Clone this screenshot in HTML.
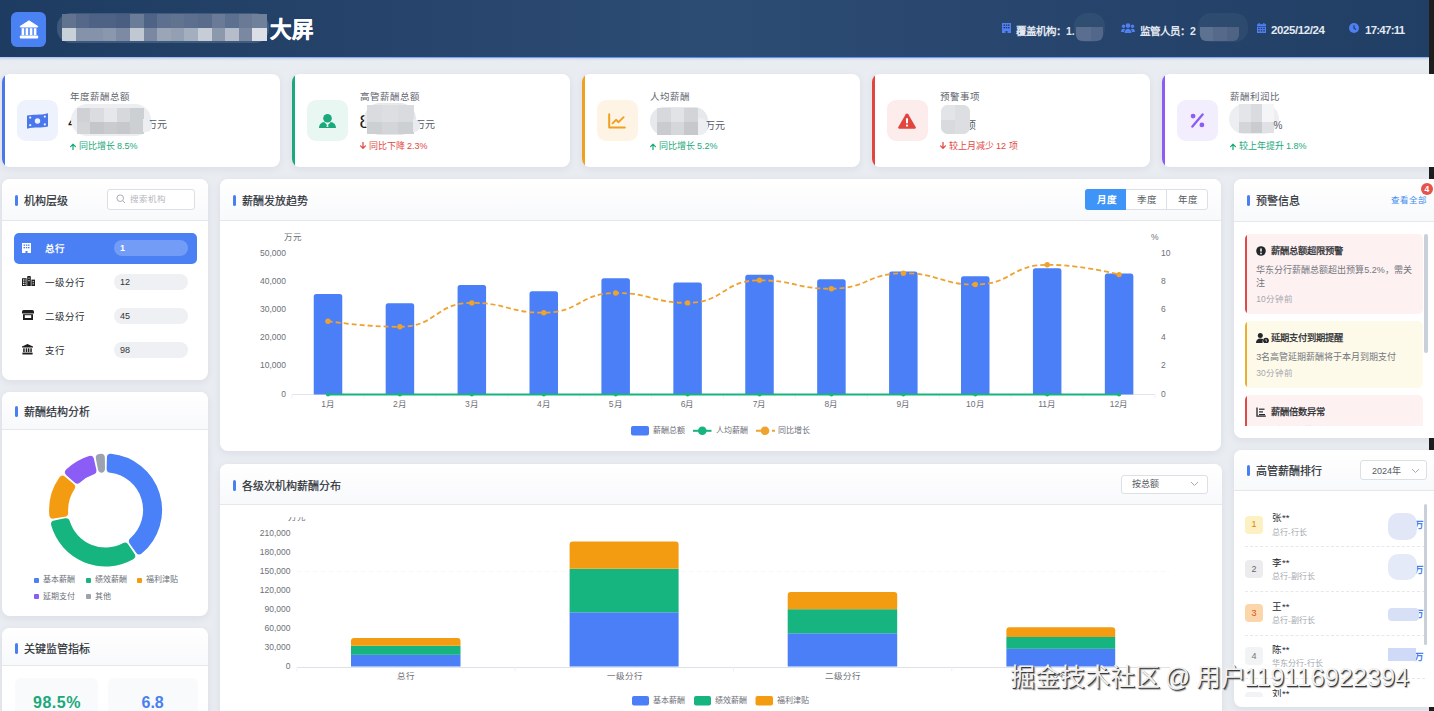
<!DOCTYPE html><html lang="zh-CN"><head><meta charset="utf-8"><title>dashboard</title><style>
*{box-sizing:border-box;margin:0;padding:0}
html,body{width:1434px;height:711px;overflow:hidden;background:#1e1e1e}
body{position:relative;font-family:"Liberation Sans",sans-serif;color:#222}
.a{position:absolute}
.page{left:0;top:0;width:1429px;height:711px;background:#e9ecf1}
.hdr{left:0;top:0;width:1429px;height:57px;background:linear-gradient(90deg,#1e3b61 0%,#2d4c73 50%,#213e65 100%)}
.hline{left:0;top:56.5px;width:1429px;height:1.5px;background:linear-gradient(90deg,rgba(74,128,240,.3),#5a8cf0 50%,rgba(74,128,240,.5));box-shadow:0 1px 2px rgba(90,140,230,.4)}
.card{background:#fff;border-radius:8px;box-shadow:0 2px 8px rgba(30,50,90,.07)}
.t{white-space:nowrap;line-height:1}
.ph{left:0;top:0;right:0;background:linear-gradient(180deg,#ffffff,#f8f9fb);border-bottom:1px solid #e4e7ec;border-radius:8px 8px 0 0}
.bar{width:3px;border-radius:2px;background:#4a7ff0}
.ptitle{font-size:11px;font-weight:normal;color:#2a2e35;-webkit-text-stroke:0.2px #2a2e35}
</style></head><body>
<div class="a page"></div>
<div class="a hdr"></div><div class="a hline"></div>
<div class="a" style="left:11px;top:12px;width:35px;height:35px;border-radius:6px;background:#4b82f3"></div>
<svg class="a" style="left:19px;top:19.5px" width="20" height="19" viewBox="0 0 20 19"><path fill="#fff" stroke="#fff" stroke-width="1" stroke-linejoin="round" d="M10 0.8 L18.8 6.4 Q19 7 18.4 7 H1.6 Q1 7 1.2 6.4 Z"/><rect x="2.6" y="8.2" width="2.6" height="7" fill="#fff"/><rect x="6.6" y="8.2" width="2.6" height="7" fill="#fff"/><rect x="10.8" y="8.2" width="2.6" height="7" fill="#fff"/><rect x="14.8" y="8.2" width="2.6" height="7" fill="#fff"/><rect x="0.8" y="15.4" width="18.4" height="3" rx="1" fill="#fff"/></svg>
<div class="a" style="left:57px;top:13px;width:212px;height:30px;border-radius:14px;background:rgba(120,140,170,.35)"></div>
<div class="a" style="left:62.0px;top:14px;width:14.2px;height:13.5px;background:#62738f"></div>
<div class="a" style="left:62.0px;top:27.5px;width:14.2px;height:13.5px;background:#c8d0d8"></div>
<div class="a" style="left:75.6px;top:14px;width:14.2px;height:13.5px;background:#56688a"></div>
<div class="a" style="left:75.6px;top:27.5px;width:14.2px;height:13.5px;background:#8593aa"></div>
<div class="a" style="left:89.2px;top:14px;width:14.2px;height:13.5px;background:#4e6285"></div>
<div class="a" style="left:89.2px;top:27.5px;width:14.2px;height:13.5px;background:#8593aa"></div>
<div class="a" style="left:102.8px;top:14px;width:14.2px;height:13.5px;background:#4e6285"></div>
<div class="a" style="left:102.8px;top:27.5px;width:14.2px;height:13.5px;background:#8a98ad"></div>
<div class="a" style="left:116.4px;top:14px;width:14.2px;height:13.5px;background:#4a5e82"></div>
<div class="a" style="left:116.4px;top:27.5px;width:14.2px;height:13.5px;background:#7c8ba3"></div>
<div class="a" style="left:130.0px;top:14px;width:14.2px;height:13.5px;background:#6a7c98"></div>
<div class="a" style="left:130.0px;top:27.5px;width:14.2px;height:13.5px;background:#c0c8d2"></div>
<div class="a" style="left:143.6px;top:14px;width:14.2px;height:13.5px;background:#4f6386"></div>
<div class="a" style="left:143.6px;top:27.5px;width:14.2px;height:13.5px;background:#7a89a1"></div>
<div class="a" style="left:157.2px;top:14px;width:14.2px;height:13.5px;background:#5e7090"></div>
<div class="a" style="left:157.2px;top:27.5px;width:14.2px;height:13.5px;background:#9aa6b8"></div>
<div class="a" style="left:170.8px;top:14px;width:14.2px;height:13.5px;background:#62738f"></div>
<div class="a" style="left:170.8px;top:27.5px;width:14.2px;height:13.5px;background:#939fb3"></div>
<div class="a" style="left:184.4px;top:14px;width:14.2px;height:13.5px;background:#5d6f8f"></div>
<div class="a" style="left:184.4px;top:27.5px;width:14.2px;height:13.5px;background:#a3aebe"></div>
<div class="a" style="left:198.0px;top:14px;width:14.2px;height:13.5px;background:#5a6c8c"></div>
<div class="a" style="left:198.0px;top:27.5px;width:14.2px;height:13.5px;background:#c6cdd6"></div>
<div class="a" style="left:211.6px;top:14px;width:14.2px;height:13.5px;background:#697b97"></div>
<div class="a" style="left:211.6px;top:27.5px;width:14.2px;height:13.5px;background:#8c99ad"></div>
<div class="a" style="left:225.2px;top:14px;width:14.2px;height:13.5px;background:#5e708f"></div>
<div class="a" style="left:225.2px;top:27.5px;width:14.2px;height:13.5px;background:#b4bdc9"></div>
<div class="a" style="left:238.8px;top:14px;width:14.2px;height:13.5px;background:#6a7a96"></div>
<div class="a" style="left:238.8px;top:27.5px;width:14.2px;height:13.5px;background:#7a89a1"></div>
<div class="a" style="left:252.4px;top:14px;width:14.2px;height:13.5px;background:#6f809a"></div>
<div class="a" style="left:252.4px;top:27.5px;width:14.2px;height:13.5px;background:#dcdfe5"></div>
<div class="a t" style="left:270px;top:19.5px;font-size:21.5px;font-weight:bold;color:#fff;-webkit-text-stroke:0.4px #fff">大屏</div>
<svg class="a" style="left:1002px;top:23px" width="9" height="10" viewBox="0 0 9 10"><path fill="#4f7ff2" d="M0 0h9v10H5.5V8h-2v2H0z"/><g fill="#203c62"><rect x="1.5" y="1.5" width="1.5" height="1.3"/><rect x="3.8" y="1.5" width="1.5" height="1.3"/><rect x="6" y="1.5" width="1.5" height="1.3"/><rect x="1.5" y="4" width="1.5" height="1.3"/><rect x="3.8" y="4" width="1.5" height="1.3"/><rect x="6" y="4" width="1.5" height="1.3"/></g></svg>
<div class="a t" style="left:1016px;top:25.5px;font-size:10.5px;font-weight:bold;color:#e3e9f2">覆盖机构：1.</div>
<div class="a" style="left:1074px;top:13px;width:31px;height:29px;border-radius:13px;background:rgba(255,255,255,.045)"></div>
<div class="a" style="left:1076px;top:27px;width:15px;height:14px;border-radius:0 0 0 6px;background:#5a6f8f"></div>
<div class="a" style="left:1091px;top:27px;width:12px;height:14px;border-radius:0 0 6px 0;background:#52678a"></div>
<svg class="a" style="left:1121px;top:23px" width="14" height="10" viewBox="0 0 14 10"><g fill="#4f7ff2"><circle cx="7" cy="2.6" r="2.3"/><circle cx="2.5" cy="3.2" r="1.7"/><circle cx="11.5" cy="3.2" r="1.7"/><path d="M3.5 10c0-2.6 1.5-4.2 3.5-4.2s3.5 1.6 3.5 4.2z"/><path d="M0 9c0-2 1-3.2 2.5-3.2 .8 0 1.3.3 1.6.6C3.4 7.2 3 8 3 9z"/><path d="M14 9c0-2-1-3.2-2.5-3.2-.8 0-1.3.3-1.6.6.7.8 1.1 1.6 1.1 2.6z"/></g></svg>
<div class="a t" style="left:1140px;top:25.5px;font-size:10.5px;font-weight:bold;color:#e3e9f2">监管人员：2</div>
<div class="a" style="left:1198px;top:13px;width:50px;height:29px;border-radius:13px;background:rgba(255,255,255,.045)"></div>
<div class="a" style="left:1200px;top:27px;width:13px;height:14px;border-radius:0 0 0 6px;background:#5d7190"></div>
<div class="a" style="left:1213px;top:27px;width:14px;height:14px;background:#56698a"></div>
<div class="a" style="left:1227px;top:27px;width:12px;height:14px;border-radius:0 0 6px 0;background:#4f6385"></div>
<svg class="a" style="left:1257px;top:23px" width="9" height="10" viewBox="0 0 9 10"><g fill="#4f7ff2"><rect x="1.5" y="0" width="1.3" height="2"/><rect x="6.2" y="0" width="1.3" height="2"/><path d="M0 1.2h9v2H0z"/><path d="M0 3.8h9V10H0z"/></g><g fill="#203c62"><rect x="1.2" y="4.8" width="1.5" height="1.3"/><rect x="3.75" y="4.8" width="1.5" height="1.3"/><rect x="6.3" y="4.8" width="1.5" height="1.3"/><rect x="1.2" y="7.2" width="1.5" height="1.3"/><rect x="3.75" y="7.2" width="1.5" height="1.3"/><rect x="6.3" y="7.2" width="1.5" height="1.3"/></g></svg>
<div class="a t" style="left:1271px;top:25px;font-size:11.5px;letter-spacing:-0.4px;font-weight:bold;color:#e3e9f2">2025/12/24</div>
<svg class="a" style="left:1349px;top:23px" width="10" height="10" viewBox="0 0 10 10"><circle cx="5" cy="5" r="5" fill="#4f7ff2"/><path d="M5 2.2V5.2L7 6.6" stroke="#203c62" stroke-width="1.2" fill="none"/></svg>
<div class="a t" style="left:1365px;top:25px;font-size:11.5px;letter-spacing:-0.75px;font-weight:bold;color:#e3e9f2">17:47:11</div>
<div class="a card" style="left:2px;top:74px;width:278px;height:93px;overflow:hidden"><div class="a" style="left:0;top:0;width:3px;height:93px;background:#4a78ec"></div></div>
<div class="a" style="left:16.5px;top:100px;width:41px;height:41px;border-radius:9px;background:#eef2fd"></div>
<div class="a" style="left:26.5px;top:112.5px;width:21px;height:16px;line-height:0"><svg width="21" height="16" viewBox="0 0 21 16"><path fill="#4a78ec" d="M0 2.6 C6 1.2 12 2.6 21 0.3 V13.6 C14 15.4 8 13.8 0 15.8 Z"/><circle cx="10.5" cy="8" r="2.7" fill="#eef2fd"/><g fill="#eef2fd"><circle cx="3.2" cy="4.6" r="1.1"/><circle cx="17.8" cy="3.6" r="1.1"/><circle cx="3.2" cy="12.2" r="1.1"/><circle cx="17.8" cy="11.4" r="1.1"/></g></svg></div>
<div class="a t" style="left:70px;top:91.5px;font-size:9.5px;color:#5f6670">年度薪酬总额</div>
<svg class="a" style="left:69.8px;top:142.5px" width="6" height="7.5" viewBox="0 0 6 7.5"><path d="M3 7.2V1.4M0.6 3.6L3 1.1 5.4 3.6" fill="none" stroke="#1aa97a" stroke-width="1.25" stroke-linecap="round" stroke-linejoin="round"/></svg>
<div class="a t" style="left:78.5px;top:141.5px;font-size:9px;color:#1aa97a">同比增长 8.5%</div>
<div class="a card" style="left:292px;top:74px;width:278px;height:93px;overflow:hidden"><div class="a" style="left:0;top:0;width:3px;height:93px;background:#1aa97a"></div></div>
<div class="a" style="left:306.5px;top:100px;width:41px;height:41px;border-radius:9px;background:#e8f7f1"></div>
<div class="a" style="left:318.5px;top:113.5px;width:17px;height:14px;line-height:0"><svg width="17" height="14" viewBox="0 0 17 14"><circle cx="8.5" cy="4.3" r="4.3" fill="#1aa97a"/><path fill="#1aa97a" d="M0 14 C0 10.6 2.2 8.3 5.2 8 L8.5 11.5 L11.8 8 C14.8 8.3 17 10.6 17 14 Z"/><path fill="#e8f7f1" d="M7.8 9.2h1.4l-.2 1.2.5 2.6h-2l.5-2.6z"/></svg></div>
<div class="a t" style="left:360px;top:91.5px;font-size:9.5px;color:#5f6670">高管薪酬总额</div>
<svg class="a" style="left:359.8px;top:142px" width="6" height="7.5" viewBox="0 0 6 7.5"><path d="M3 0.3V6.1M0.6 3.9L3 6.4 5.4 3.9" fill="none" stroke="#e2473f" stroke-width="1.25" stroke-linecap="round" stroke-linejoin="round"/></svg>
<div class="a t" style="left:368.5px;top:141.5px;font-size:9px;color:#e2473f">同比下降 2.3%</div>
<div class="a card" style="left:582px;top:74px;width:278px;height:93px;overflow:hidden"><div class="a" style="left:0;top:0;width:3px;height:93px;background:#f0a020"></div></div>
<div class="a" style="left:596.5px;top:100px;width:41px;height:41px;border-radius:9px;background:#fef4e6"></div>
<div class="a" style="left:608.0px;top:112.5px;width:18px;height:16px;line-height:0"><svg width="18" height="16" viewBox="0 0 18 16"><path fill="none" stroke="#f0a020" stroke-width="2" stroke-linecap="round" stroke-linejoin="round" d="M1.2 1.2 V14.6 H16.8"/><path fill="none" stroke="#f0a020" stroke-width="1.9" stroke-linecap="round" stroke-linejoin="round" d="M4.6 10.4 L8 6.8 L10.6 9.2 L15.6 4.2"/></svg></div>
<div class="a t" style="left:650px;top:91.5px;font-size:9.5px;color:#5f6670">人均薪酬</div>
<svg class="a" style="left:649.8px;top:142.5px" width="6" height="7.5" viewBox="0 0 6 7.5"><path d="M3 7.2V1.4M0.6 3.6L3 1.1 5.4 3.6" fill="none" stroke="#1aa97a" stroke-width="1.25" stroke-linecap="round" stroke-linejoin="round"/></svg>
<div class="a t" style="left:658.5px;top:141.5px;font-size:9px;color:#1aa97a">同比增长 5.2%</div>
<div class="a card" style="left:872px;top:74px;width:278px;height:93px;overflow:hidden"><div class="a" style="left:0;top:0;width:3px;height:93px;background:#e0463e"></div></div>
<div class="a" style="left:886.5px;top:100px;width:41px;height:41px;border-radius:9px;background:#fdecec"></div>
<div class="a" style="left:898.0px;top:112.5px;width:18px;height:16px;line-height:0"><svg width="18" height="16" viewBox="0 0 18 16"><path fill="#e0463e" d="M9 0.4 C9.6 0.4 10 0.7 10.3 1.2 L17.7 13.9 C18.2 14.8 17.6 15.8 16.6 15.8 H1.4 C0.4 15.8 -0.2 14.8 0.3 13.9 L7.7 1.2 C8 0.7 8.4 0.4 9 0.4 Z"/><rect x="8" y="5" width="2" height="5.4" rx="1" fill="#fff"/><circle cx="9" cy="12.6" r="1.15" fill="#fff"/></svg></div>
<div class="a t" style="left:940px;top:91.5px;font-size:9.5px;color:#5f6670">预警事项</div>
<svg class="a" style="left:939.8px;top:142px" width="6" height="7.5" viewBox="0 0 6 7.5"><path d="M3 0.3V6.1M0.6 3.9L3 6.4 5.4 3.9" fill="none" stroke="#e2473f" stroke-width="1.25" stroke-linecap="round" stroke-linejoin="round"/></svg>
<div class="a t" style="left:948.5px;top:141.5px;font-size:9px;color:#e2473f">较上月减少 12 项</div>
<div class="a card" style="left:1162px;top:74px;width:290px;height:93px;overflow:hidden"><div class="a" style="left:0;top:0;width:3px;height:93px;background:#8b5cf6"></div></div>
<div class="a" style="left:1176.5px;top:100px;width:41px;height:41px;border-radius:9px;background:#f2eefd"></div>
<div class="a" style="left:1189.5px;top:113.0px;width:15px;height:15px;line-height:0"><svg width="15" height="15" viewBox="0 0 15 15"><circle cx="3.1" cy="3.1" r="2.4" fill="#8b5cf6"/><circle cx="11.9" cy="11.9" r="2.4" fill="#8b5cf6"/><path d="M12.6 1.4 L2.4 13.6" stroke="#8b5cf6" stroke-width="2.3" stroke-linecap="round"/></svg></div>
<div class="a t" style="left:1230px;top:91.5px;font-size:9.5px;color:#5f6670">薪酬利润比</div>
<svg class="a" style="left:1229.8px;top:142.5px" width="6" height="7.5" viewBox="0 0 6 7.5"><path d="M3 7.2V1.4M0.6 3.6L3 1.1 5.4 3.6" fill="none" stroke="#1aa97a" stroke-width="1.25" stroke-linecap="round" stroke-linejoin="round"/></svg>
<div class="a t" style="left:1238.5px;top:141.5px;font-size:9px;color:#1aa97a">较上年提升 1.8%</div>
<div class="a t" style="left:68px;top:112px;font-size:19px;color:#1d1d1f">4</div>
<div class="a" style="left:71px;top:103.5px;width:80px;height:32.0px;border-radius:16px;background:#eceef1"></div>
<div class="a" style="left:76.7px;top:108px;width:13.9px;height:14.4px;background:#cfd1d5"></div>
<div class="a" style="left:76.7px;top:121.8px;width:13.9px;height:12.5px;background:#d3d5d8"></div>
<div class="a" style="left:90.1px;top:108px;width:13.9px;height:14.4px;background:#dadcdf"></div>
<div class="a" style="left:90.1px;top:121.8px;width:13.9px;height:12.5px;background:#c4c6ca"></div>
<div class="a" style="left:103.5px;top:108px;width:13.9px;height:14.4px;background:#e6e7ea"></div>
<div class="a" style="left:103.5px;top:121.8px;width:13.9px;height:12.5px;background:#c9cbce"></div>
<div class="a" style="left:116.9px;top:108px;width:13.9px;height:14.4px;background:#d6d8db"></div>
<div class="a" style="left:116.9px;top:121.8px;width:13.9px;height:12.5px;background:#c6c8cc"></div>
<div class="a" style="left:130.3px;top:108px;width:13.9px;height:14.4px;background:#cdd0d3"></div>
<div class="a" style="left:130.3px;top:121.8px;width:13.9px;height:12.5px;background:#cdd0d3"></div>
<div class="a t" style="left:147px;top:120px;font-size:10px;color:#555b63">万元</div>
<div class="a" style="left:143px;top:119px;width:9px;height:13px;border-radius:0 6px 6px 0;background:#eceef1"></div>
<div class="a t" style="left:359.5px;top:112px;font-size:19px;color:#1d1d1f">8</div>
<div class="a" style="left:364px;top:103px;width:52px;height:32px;border-radius:16px;background:#e6e8eb"></div>
<div class="a" style="left:366.7px;top:104.7px;width:16.2px;height:17.6px;background:#d9dbde"></div>
<div class="a" style="left:366.7px;top:121.7px;width:16.2px;height:12.2px;background:#cdd0d3"></div>
<div class="a" style="left:382.4px;top:104.7px;width:16.2px;height:17.6px;background:#dcdee1"></div>
<div class="a" style="left:382.4px;top:121.7px;width:16.2px;height:12.2px;background:#d3d5d8"></div>
<div class="a" style="left:398.2px;top:104.7px;width:16.2px;height:17.6px;background:#d9dbde"></div>
<div class="a" style="left:398.2px;top:121.7px;width:16.2px;height:12.2px;background:#cdd0d3"></div>
<div class="a t" style="left:414.5px;top:120px;font-size:10px;color:#555b63">万元</div>
<div class="a" style="left:413px;top:119px;width:7px;height:13px;border-radius:0 6px 6px 0;background:#e9ebee"></div>
<div class="a" style="left:650px;top:107px;width:58px;height:28px;border-radius:14px;background:#e6e8eb"></div>
<div class="a" style="left:657.0px;top:108px;width:14.2px;height:14.6px;background:#d6d8db"></div>
<div class="a" style="left:657.0px;top:122.0px;width:14.2px;height:12.7px;background:#c9cbcf"></div>
<div class="a" style="left:670.7px;top:108px;width:14.2px;height:14.6px;background:#e2e3e6"></div>
<div class="a" style="left:670.7px;top:122.0px;width:14.2px;height:12.7px;background:#d5d7da"></div>
<div class="a" style="left:684.3px;top:108px;width:14.2px;height:14.6px;background:#d2d4d8"></div>
<div class="a" style="left:684.3px;top:122.0px;width:14.2px;height:12.7px;background:#c6c8cc"></div>
<div class="a t" style="left:705px;top:120.5px;font-size:10px;color:#555b63">万元</div>
<div class="a" style="left:698px;top:118px;width:10px;height:17px;border-radius:0 8px 8px 0;background:#eceef1"></div>
<div class="a t" style="left:965.5px;top:120.5px;font-size:10px;color:#555b63">项</div>
<div class="a" style="left:941px;top:104.7px;width:28.5px;height:29.7px;border-radius:7px;overflow:hidden;background:#dfe1e4"><div class="a" style="left:0;top:0;width:14px;height:15px;background:#e2e4e7"></div><div class="a" style="left:14px;top:0;width:15px;height:15px;background:#dcdee1"></div><div class="a" style="left:0;top:15px;width:14px;height:15px;background:#d8dadd"></div><div class="a" style="left:14px;top:15px;width:15px;height:15px;background:#dcdee1"></div></div>
<div class="a" style="left:1229px;top:104px;width:50px;height:30px;border-radius:15px;background:#eceef1"></div>
<div class="a" style="left:1239.0px;top:104.2px;width:12.0px;height:18.2px;background:#e3e5e8"></div>
<div class="a" style="left:1239.0px;top:121.8px;width:12.0px;height:11.7px;background:#d3d5d8"></div>
<div class="a" style="left:1250.5px;top:104.2px;width:12.0px;height:18.2px;background:#d9dbde"></div>
<div class="a" style="left:1250.5px;top:121.8px;width:12.0px;height:11.7px;background:#c9cbcf"></div>
<div class="a" style="left:1262.1px;top:104.2px;width:12.0px;height:18.2px;background:#f4f5f7"></div>
<div class="a" style="left:1262.1px;top:121.8px;width:12.0px;height:11.7px;background:#dfe1e4"></div>
<div class="a t" style="left:1273.5px;top:120.5px;font-size:10px;color:#555b63">%</div>
<div class="a card" style="left:2px;top:179px;width:206px;height:201px;"><div class="a ph" style="height:42px"></div></div>
<div class="a bar" style="left:15px;top:194.5px;height:11px"></div><div class="a t ptitle" style="left:24px;top:195.5px">机构层级</div>
<div class="a" style="left:107px;top:189px;width:88px;height:21px;border:1px solid #dcdfe6;border-radius:3px;background:#fff"></div>
<svg class="a" style="left:116px;top:194px" width="10" height="10" viewBox="0 0 10 10"><circle cx="4.2" cy="4.2" r="3.3" fill="none" stroke="#a8abb2" stroke-width="1"/><path d="M6.6 6.6 L9 9" stroke="#a8abb2" stroke-width="1"/></svg>
<div class="a t" style="left:130px;top:195px;font-size:8.5px;color:#b4b7bd">搜索机构</div>
<div class="a" style="left:14px;top:233px;width:183px;height:31px;border-radius:5px;background:#4b80f4"></div>
<svg class="a" style="left:22px;top:243px" width="9" height="10" viewBox="0 0 9 10"><path fill="#fff" d="M0 0h9v10H5.5V8h-2v2H0z"/><g fill="#4a7ff0"><rect x="1.5" y="1.5" width="1.5" height="1.3"/><rect x="3.8" y="1.5" width="1.5" height="1.3"/><rect x="6" y="1.5" width="1.5" height="1.3"/><rect x="1.5" y="4" width="1.5" height="1.3"/><rect x="3.8" y="4" width="1.5" height="1.3"/><rect x="6" y="4" width="1.5" height="1.3"/></g></svg>
<div class="a t" style="left:45px;top:243.5px;font-size:9.5px;font-weight:bold;color:#fff">总行</div>
<div class="a" style="left:114px;top:240px;width:74px;height:16px;border-radius:8px;background:rgba(255,255,255,.22)"></div>
<div class="a t" style="left:120px;top:243.5px;font-size:9px;font-weight:bold;color:#fff">1</div>
<svg class="a" style="left:22px;top:276.2px" width="13" height="10" viewBox="0 0 13 10"><path fill="#1e1e1e" d="M0 2.2h4.6V10H0z"/><path fill="#1e1e1e" d="M5.2 0.8Q5.2 0 6.2 0h1.6Q8.8 0 8.8 0.8V10H5.2z"/><path fill="#1e1e1e" d="M9.4 3.6h3.6V10H9.4z"/><g fill="#fff"><rect x="1" y="3.4" width="1" height="1.2"/><rect x="2.6" y="3.4" width="1" height="1.2"/><rect x="1" y="5.6" width="1" height="1.2"/><rect x="2.6" y="5.6" width="1" height="1.2"/><rect x="1" y="7.8" width="1" height="1.2"/><rect x="2.6" y="7.8" width="1" height="1.2"/><rect x="6.5" y="1.6" width="1" height="1.2"/><rect x="6.5" y="4" width="1" height="1.2"/><rect x="10.7" y="5" width="1" height="1.2"/><rect x="10.7" y="7.2" width="1" height="1.2"/></g></svg>
<div class="a t" style="left:45px;top:277.5px;font-size:9.5px;color:#2a2d33">一级分行</div>
<div class="a" style="left:114px;top:274px;width:74px;height:16px;border-radius:8px;background:#eff0f3"></div>
<div class="a t" style="left:120px;top:278px;font-size:9px;color:#333">12</div>
<svg class="a" style="left:22px;top:310.2px" width="12" height="10" viewBox="0 0 12 10"><path fill="#1e1e1e" d="M1.6 0h8.8Q12 0 12 2V3.6H0V2Q0 0 1.6 0z"/><path fill="#1e1e1e" d="M1 4.2h10V10H1z"/><rect x="2.8" y="5.2" width="6.4" height="2.8" fill="#fff"/></svg>
<div class="a t" style="left:45px;top:311.5px;font-size:9.5px;color:#2a2d33">二级分行</div>
<div class="a" style="left:114px;top:308px;width:74px;height:16px;border-radius:8px;background:#eff0f3"></div>
<div class="a t" style="left:120px;top:312px;font-size:9px;color:#333">45</div>
<svg class="a" style="left:22px;top:344.2px" width="11" height="10.5" viewBox="0 0 11 10.5"><path fill="#1e1e1e" d="M5.5 0 L11 2.6 V3.6 H0 V2.6Z"/><rect x="1.2" y="4.3" width="1.5" height="3.8" fill="#1e1e1e"/><rect x="3.7" y="4.3" width="1.5" height="3.8" fill="#1e1e1e"/><rect x="5.9" y="4.3" width="1.5" height="3.8" fill="#1e1e1e"/><rect x="8.3" y="4.3" width="1.5" height="3.8" fill="#1e1e1e"/><rect x="0.4" y="8.6" width="10.2" height="1.9" fill="#1e1e1e"/></svg>
<div class="a t" style="left:45px;top:345.5px;font-size:9.5px;color:#2a2d33">支行</div>
<div class="a" style="left:114px;top:342px;width:74px;height:16px;border-radius:8px;background:#eff0f3"></div>
<div class="a t" style="left:120px;top:346px;font-size:9px;color:#333">98</div>
<div class="a card" style="left:2px;top:392px;width:206px;height:224px;"><div class="a ph" style="height:38px"></div></div>
<div class="a bar" style="left:15px;top:406px;height:11px"></div><div class="a t ptitle" style="left:24px;top:407px">薪酬结构分析</div>
<svg class="a" style="left:0;top:0" width="220" height="711" viewBox="0 0 220 711"><path d="M110.99,453.76 A56.5,56.5 0 0 1 141.67,553.49 Q138.50,555.93 136.17,552.68 L129.77,543.74 Q127.44,540.49 130.56,537.99 A37.5,37.5 0 0 0 110.51,472.82 Q106.53,472.51 106.63,468.51 L106.90,457.52 Q107.00,453.52 110.99,453.76 Z" fill="#4a80f8"/><path d="M133.27,559.26 A56.5,56.5 0 0 1 51.20,525.26 Q50.26,521.38 54.18,520.57 L64.95,518.36 Q68.87,517.55 69.88,521.42 A37.5,37.5 0 0 0 122.78,543.33 Q126.23,541.31 128.44,544.65 L134.49,553.84 Q136.69,557.18 133.27,559.26 Z" fill="#16b47f"/><path d="M49.34,515.25 A56.5,56.5 0 0 1 59.50,477.33 Q61.93,474.15 65.02,476.69 L73.52,483.67 Q76.62,486.21 74.25,489.43 A37.5,37.5 0 0 0 68.16,512.14 Q68.60,516.11 64.66,516.77 L53.80,518.56 Q49.86,519.21 49.34,515.25 Z" fill="#f39c12"/><path d="M66.12,469.58 A56.5,56.5 0 0 1 89.11,455.96 Q92.97,454.93 93.87,458.83 L96.32,469.55 Q97.22,473.45 93.37,474.55 A37.5,37.5 0 0 0 80.38,482.25 Q77.56,485.10 74.57,482.44 L66.35,475.13 Q63.36,472.48 66.12,469.58 Z" fill="#8b5cf6"/><path d="M99.08,453.88 A56.5,56.5 0 0 1 100.80,453.70 Q104.80,453.51 104.85,457.51 L105.01,468.50 Q105.07,472.50 101.08,472.77 A37.5,37.5 0 0 0 102.61,472.62 Q98.65,473.15 97.91,469.22 L95.87,458.41 Q95.12,454.48 99.08,453.88 Z" fill="#9ca3af"/></svg>
<div class="a" style="left:33.6px;top:577.5px;width:5px;height:5px;border-radius:1px;background:#4a80f8"></div>
<div class="a t" style="left:43.1px;top:576px;font-size:8px;color:#6b7078">基本薪酬</div>
<div class="a" style="left:85.5px;top:577.5px;width:5px;height:5px;border-radius:1px;background:#16b47f"></div>
<div class="a t" style="left:95.0px;top:576px;font-size:8px;color:#6b7078">绩效薪酬</div>
<div class="a" style="left:136.5px;top:577.5px;width:5px;height:5px;border-radius:1px;background:#f39c12"></div>
<div class="a t" style="left:146.0px;top:576px;font-size:8px;color:#6b7078">福利津贴</div>
<div class="a" style="left:33.6px;top:594.0px;width:5px;height:5px;border-radius:1px;background:#8b5cf6"></div>
<div class="a t" style="left:43.1px;top:592.5px;font-size:8px;color:#6b7078">延期支付</div>
<div class="a" style="left:85.5px;top:594.0px;width:5px;height:5px;border-radius:1px;background:#9ca3af"></div>
<div class="a t" style="left:95.0px;top:592.5px;font-size:8px;color:#6b7078">其他</div>
<div class="a card" style="left:2px;top:628px;width:206px;height:120px;"><div class="a ph" style="height:38px"></div></div>
<div class="a bar" style="left:15px;top:642.5px;height:11px"></div><div class="a t ptitle" style="left:24px;top:643.5px">关键监管指标</div>
<div class="a" style="left:15px;top:677.5px;width:83px;height:60px;border-radius:6px;background:#f9fafc"></div>
<div class="a" style="left:108px;top:677.5px;width:90px;height:60px;border-radius:6px;background:#f9fafc"></div>
<div class="a t" style="left:33px;top:695px;font-size:16px;letter-spacing:0.5px;font-weight:bold;color:#1aa97a">98.5%</div>
<div class="a t" style="left:141.5px;top:695px;font-size:16px;font-weight:bold;color:#4a7ff0">6.8</div>
<div class="a card" style="left:220px;top:179px;width:1001px;height:272px;"><div class="a ph" style="height:42px"></div></div>
<div class="a bar" style="left:233px;top:194.5px;height:11px"></div><div class="a t ptitle" style="left:242px;top:195.5px">薪酬发放趋势</div>
<div class="a" style="left:1085px;top:189px;width:122.5px;height:20.5px;border:1px solid #dcdfe6;border-radius:3px;background:#fff"></div>
<div class="a" style="left:1166px;top:189px;width:1px;height:20.5px;background:#dcdfe6"></div>
<div class="a" style="left:1085px;top:189px;width:41px;height:20.5px;border-radius:3px 0 0 3px;background:#3f94f7"></div>
<div class="a t" style="left:1096.5px;top:194.5px;font-size:9.5px;font-weight:bold;color:#fff">月度</div>
<div class="a t" style="left:1137px;top:194.5px;font-size:9.5px;color:#555a62">季度</div>
<div class="a t" style="left:1177.5px;top:194.5px;font-size:9.5px;color:#555a62">年度</div>
<svg class="a" style="left:0;top:0" width="1434" height="711" viewBox="0 0 1434 711"><line x1="292" y1="394.5" x2="1155" y2="394.5" stroke="#e0e6f1" stroke-width="1"/><line x1="292.0" y1="394.5" x2="292.0" y2="398.5" stroke="#eef1f6" stroke-width="1"/><line x1="363.9" y1="394.5" x2="363.9" y2="398.5" stroke="#eef1f6" stroke-width="1"/><line x1="435.8" y1="394.5" x2="435.8" y2="398.5" stroke="#eef1f6" stroke-width="1"/><line x1="507.8" y1="394.5" x2="507.8" y2="398.5" stroke="#eef1f6" stroke-width="1"/><line x1="579.7" y1="394.5" x2="579.7" y2="398.5" stroke="#eef1f6" stroke-width="1"/><line x1="651.6" y1="394.5" x2="651.6" y2="398.5" stroke="#eef1f6" stroke-width="1"/><line x1="723.5" y1="394.5" x2="723.5" y2="398.5" stroke="#eef1f6" stroke-width="1"/><line x1="795.4" y1="394.5" x2="795.4" y2="398.5" stroke="#eef1f6" stroke-width="1"/><line x1="867.3" y1="394.5" x2="867.3" y2="398.5" stroke="#eef1f6" stroke-width="1"/><line x1="939.3" y1="394.5" x2="939.3" y2="398.5" stroke="#eef1f6" stroke-width="1"/><line x1="1011.2" y1="394.5" x2="1011.2" y2="398.5" stroke="#eef1f6" stroke-width="1"/><line x1="1083.1" y1="394.5" x2="1083.1" y2="398.5" stroke="#eef1f6" stroke-width="1"/><line x1="1155.0" y1="394.5" x2="1155.0" y2="398.5" stroke="#eef1f6" stroke-width="1"/><path d="M313.75,394.50 V296.57 Q313.75,294.07 316.25,294.07 H339.75 Q342.25,294.07 342.25,296.57 V394.50 Z" fill="#4a7ff8"/><path d="M385.67,394.50 V305.68 Q385.67,303.18 388.17,303.18 H411.67 Q414.17,303.18 414.17,305.68 V394.50 Z" fill="#4a7ff8"/><path d="M457.58,394.50 V287.47 Q457.58,284.97 460.08,284.97 H483.58 Q486.08,284.97 486.08,287.47 V394.50 Z" fill="#4a7ff8"/><path d="M529.50,394.50 V293.73 Q529.50,291.23 532.00,291.23 H555.50 Q558.00,291.23 558.00,293.73 V394.50 Z" fill="#4a7ff8"/><path d="M601.42,394.50 V280.64 Q601.42,278.14 603.92,278.14 H627.42 Q629.92,278.14 629.92,280.64 V394.50 Z" fill="#4a7ff8"/><path d="M673.34,394.50 V284.91 Q673.34,282.41 675.84,282.41 H699.34 Q701.84,282.41 701.84,284.91 V394.50 Z" fill="#4a7ff8"/><path d="M745.25,394.50 V277.23 Q745.25,274.73 747.75,274.73 H771.25 Q773.75,274.73 773.75,277.23 V394.50 Z" fill="#4a7ff8"/><path d="M817.17,394.50 V281.78 Q817.17,279.28 819.67,279.28 H843.17 Q845.67,279.28 845.67,281.78 V394.50 Z" fill="#4a7ff8"/><path d="M889.09,394.50 V274.10 Q889.09,271.60 891.59,271.60 H915.09 Q917.59,271.60 917.59,274.10 V394.50 Z" fill="#4a7ff8"/><path d="M961.00,394.50 V278.65 Q961.00,276.15 963.50,276.15 H987.00 Q989.50,276.15 989.50,278.65 V394.50 Z" fill="#4a7ff8"/><path d="M1032.92,394.50 V270.68 Q1032.92,268.18 1035.42,268.18 H1058.92 Q1061.42,268.18 1061.42,270.68 V394.50 Z" fill="#4a7ff8"/><path d="M1104.84,394.50 V276.09 Q1104.84,273.59 1107.34,273.59 H1130.84 Q1133.34,273.59 1133.34,276.09 V394.50 Z" fill="#4a7ff8"/><line x1="328.0" y1="394.5" x2="1119.087" y2="394.5" stroke="#16b47f" stroke-width="2"/><circle cx="328.0" cy="394.5" r="2.1" fill="#16b47f"/><circle cx="399.9" cy="394.5" r="2.1" fill="#16b47f"/><circle cx="471.8" cy="394.5" r="2.1" fill="#16b47f"/><circle cx="543.8" cy="394.5" r="2.1" fill="#16b47f"/><circle cx="615.7" cy="394.5" r="2.1" fill="#16b47f"/><circle cx="687.6" cy="394.5" r="2.1" fill="#16b47f"/><circle cx="759.5" cy="394.5" r="2.1" fill="#16b47f"/><circle cx="831.4" cy="394.5" r="2.1" fill="#16b47f"/><circle cx="903.3" cy="394.5" r="2.1" fill="#16b47f"/><circle cx="975.3" cy="394.5" r="2.1" fill="#16b47f"/><circle cx="1047.2" cy="394.5" r="2.1" fill="#16b47f"/><circle cx="1119.1" cy="394.5" r="2.1" fill="#16b47f"/><path d="M328.00,321.18 C328.00,321.18 364.85,326.82 399.92,326.82 C436.77,326.82 435.10,302.85 471.83,302.85 C507.01,302.85 508.28,312.72 543.75,312.72 C580.19,312.72 579.22,292.98 615.67,292.98 C651.14,292.98 652.30,302.85 687.59,302.85 C724.22,302.85 722.82,280.29 759.50,280.29 C794.74,280.29 795.75,288.75 831.42,288.75 C867.66,288.75 867.19,273.24 903.34,273.24 C939.10,273.24 939.73,284.52 975.25,284.52 C1011.65,284.52 1010.73,264.78 1047.17,264.78 C1082.64,264.78 1119.09,274.65 1119.09,274.65" fill="none" stroke="#f0a22e" stroke-width="1.8" stroke-dasharray="5,3"/><circle cx="328.0" cy="321.2" r="2.7" fill="#f0a22e"/><circle cx="399.9" cy="326.8" r="2.7" fill="#f0a22e"/><circle cx="471.8" cy="302.9" r="2.7" fill="#f0a22e"/><circle cx="543.8" cy="312.7" r="2.7" fill="#f0a22e"/><circle cx="615.7" cy="293.0" r="2.7" fill="#f0a22e"/><circle cx="687.6" cy="302.9" r="2.7" fill="#f0a22e"/><circle cx="759.5" cy="280.3" r="2.7" fill="#f0a22e"/><circle cx="831.4" cy="288.8" r="2.7" fill="#f0a22e"/><circle cx="903.3" cy="273.2" r="2.7" fill="#f0a22e"/><circle cx="975.3" cy="284.5" r="2.7" fill="#f0a22e"/><circle cx="1047.2" cy="264.8" r="2.7" fill="#f0a22e"/><circle cx="1119.1" cy="274.6" r="2.7" fill="#f0a22e"/><rect x="631" y="426" width="18" height="9.5" rx="2" fill="#4a7ff8"/><line x1="693" y1="430.8" x2="711.5" y2="430.8" stroke="#16b47f" stroke-width="2"/><circle cx="702.3" cy="430.8" r="4.3" fill="#16b47f"/><line x1="756" y1="430.8" x2="775" y2="430.8" stroke="#f0a22e" stroke-width="2" stroke-dasharray="5,3"/><circle cx="765" cy="430.8" r="4.3" fill="#f0a22e"/></svg>
<div class="a t" style="left:186px;width:100px;text-align:right;top:248.5px;font-size:8.5px;color:#6e7079">50,000</div>
<div class="a t" style="left:186px;width:100px;text-align:right;top:276.7px;font-size:8.5px;color:#6e7079">40,000</div>
<div class="a t" style="left:186px;width:100px;text-align:right;top:304.9px;font-size:8.5px;color:#6e7079">30,000</div>
<div class="a t" style="left:186px;width:100px;text-align:right;top:333.1px;font-size:8.5px;color:#6e7079">20,000</div>
<div class="a t" style="left:186px;width:100px;text-align:right;top:361.3px;font-size:8.5px;color:#6e7079">10,000</div>
<div class="a t" style="left:186px;width:100px;text-align:right;top:389.5px;font-size:8.5px;color:#6e7079">0</div>
<div class="a t" style="left:1161px;top:248.5px;font-size:8.5px;color:#6e7079">10</div>
<div class="a t" style="left:1161px;top:276.7px;font-size:8.5px;color:#6e7079">8</div>
<div class="a t" style="left:1161px;top:304.9px;font-size:8.5px;color:#6e7079">6</div>
<div class="a t" style="left:1161px;top:333.1px;font-size:8.5px;color:#6e7079">4</div>
<div class="a t" style="left:1161px;top:361.3px;font-size:8.5px;color:#6e7079">2</div>
<div class="a t" style="left:1161px;top:389.5px;font-size:8.5px;color:#6e7079">0</div>
<div class="a t" style="left:284px;top:233px;font-size:8.5px;color:#6e7079">万元</div>
<div class="a t" style="left:1151px;top:233px;font-size:8.5px;color:#6e7079">%</div>
<div class="a t" style="left:298.0px;width:60px;text-align:center;top:399.5px;font-size:8.5px;color:#6e7079">1月</div>
<div class="a t" style="left:369.9px;width:60px;text-align:center;top:399.5px;font-size:8.5px;color:#6e7079">2月</div>
<div class="a t" style="left:441.8px;width:60px;text-align:center;top:399.5px;font-size:8.5px;color:#6e7079">3月</div>
<div class="a t" style="left:513.8px;width:60px;text-align:center;top:399.5px;font-size:8.5px;color:#6e7079">4月</div>
<div class="a t" style="left:585.7px;width:60px;text-align:center;top:399.5px;font-size:8.5px;color:#6e7079">5月</div>
<div class="a t" style="left:657.6px;width:60px;text-align:center;top:399.5px;font-size:8.5px;color:#6e7079">6月</div>
<div class="a t" style="left:729.5px;width:60px;text-align:center;top:399.5px;font-size:8.5px;color:#6e7079">7月</div>
<div class="a t" style="left:801.4px;width:60px;text-align:center;top:399.5px;font-size:8.5px;color:#6e7079">8月</div>
<div class="a t" style="left:873.3px;width:60px;text-align:center;top:399.5px;font-size:8.5px;color:#6e7079">9月</div>
<div class="a t" style="left:945.3px;width:60px;text-align:center;top:399.5px;font-size:8.5px;color:#6e7079">10月</div>
<div class="a t" style="left:1017.2px;width:60px;text-align:center;top:399.5px;font-size:8.5px;color:#6e7079">11月</div>
<div class="a t" style="left:1089.1px;width:60px;text-align:center;top:399.5px;font-size:8.5px;color:#6e7079">12月</div>
<div class="a t" style="left:653px;top:426.5px;font-size:8px;color:#6e7079">薪酬总额</div>
<div class="a t" style="left:715.5px;top:426.5px;font-size:8px;color:#6e7079">人均薪酬</div>
<div class="a t" style="left:778px;top:426.5px;font-size:8px;color:#6e7079">同比增长</div>
<div class="a card" style="left:220px;top:464px;width:1002px;height:300px;"><div class="a ph" style="height:41px"></div></div>
<div class="a bar" style="left:233px;top:479.5px;height:11px"></div><div class="a t ptitle" style="left:242px;top:480.5px">各级次机构薪酬分布</div>
<div class="a" style="left:1120.5px;top:475px;width:87px;height:19px;border:1px solid #dcdfe6;border-radius:3px;background:#fff"></div>
<div class="a t" style="left:1132px;top:479.5px;font-size:9px;color:#555a62">按总额</div>
<svg class="a" style="left:1190px;top:481px" width="9" height="6" viewBox="0 0 9 6"><path d="M1 1 L4.5 4.5 L8 1" fill="none" stroke="#a8abb2" stroke-width="1"/></svg>
<svg class="a" style="left:0;top:0" width="1434" height="711" viewBox="0 0 1434 711"><line x1="297" y1="571.5" x2="1170" y2="571.5" stroke="#f6f7f9" stroke-width="1" stroke-dasharray="4,4"/><line x1="297" y1="667.5" x2="1170" y2="667.5" stroke="#dde2ea" stroke-width="1"/><line x1="297.0" y1="667.0" x2="297.0" y2="671.5" stroke="#eef1f6" stroke-width="1"/><line x1="515.2" y1="667.0" x2="515.2" y2="671.5" stroke="#eef1f6" stroke-width="1"/><line x1="733.5" y1="667.0" x2="733.5" y2="671.5" stroke="#eef1f6" stroke-width="1"/><line x1="951.8" y1="667.0" x2="951.8" y2="671.5" stroke="#eef1f6" stroke-width="1"/><line x1="1170.0" y1="667.0" x2="1170.0" y2="671.5" stroke="#eef1f6" stroke-width="1"/><rect x="351" y="654.8" width="109.5" height="11.7" fill="#4a7ff8"/><rect x="351" y="645.8" width="109.5" height="9.0" fill="#16b47f"/><path d="M351.00,645.80 V640.90 Q351.00,637.90 354.00,637.90 H457.50 Q460.50,637.90 460.50,640.90 V645.80 Z" fill="#f39c12"/><rect x="569.6" y="612.3" width="109.0" height="54.2" fill="#4a7ff8"/><rect x="569.6" y="568.8" width="109.0" height="43.5" fill="#16b47f"/><path d="M569.60,568.80 V544.40 Q569.60,541.40 572.60,541.40 H675.60 Q678.60,541.40 678.60,544.40 V568.80 Z" fill="#f39c12"/><rect x="787.7" y="633.3" width="109.5" height="33.2" fill="#4a7ff8"/><rect x="787.7" y="609.2" width="109.5" height="24.1" fill="#16b47f"/><path d="M787.70,609.20 V594.90 Q787.70,591.90 790.70,591.90 H894.20 Q897.20,591.90 897.20,594.90 V609.20 Z" fill="#f39c12"/><rect x="1006.4" y="648.8" width="108.8" height="17.7" fill="#4a7ff8"/><rect x="1006.4" y="636.9" width="108.8" height="11.9" fill="#16b47f"/><path d="M1006.40,636.90 V630.20 Q1006.40,627.20 1009.40,627.20 H1112.20 Q1115.20,627.20 1115.20,630.20 V636.90 Z" fill="#f39c12"/><rect x="632" y="696" width="17" height="9.5" rx="2" fill="#4a7ff8"/><rect x="694" y="696" width="17" height="9.5" rx="2" fill="#16b47f"/><rect x="755.5" y="696" width="17.5" height="9.5" rx="2" fill="#f39c12"/></svg>
<div class="a t" style="left:190.5px;width:100px;text-align:right;top:528.5px;font-size:8.5px;color:#6e7079">210,000</div>
<div class="a t" style="left:190.5px;width:100px;text-align:right;top:547.5px;font-size:8.5px;color:#6e7079">180,000</div>
<div class="a t" style="left:190.5px;width:100px;text-align:right;top:566.5px;font-size:8.5px;color:#6e7079">150,000</div>
<div class="a t" style="left:190.5px;width:100px;text-align:right;top:585.5px;font-size:8.5px;color:#6e7079">120,000</div>
<div class="a t" style="left:190.5px;width:100px;text-align:right;top:604.5px;font-size:8.5px;color:#6e7079">90,000</div>
<div class="a t" style="left:190.5px;width:100px;text-align:right;top:623.5px;font-size:8.5px;color:#6e7079">60,000</div>
<div class="a t" style="left:190.5px;width:100px;text-align:right;top:642.5px;font-size:8.5px;color:#6e7079">30,000</div>
<div class="a t" style="left:190.5px;width:100px;text-align:right;top:661.5px;font-size:8.5px;color:#6e7079">0</div>
<div class="a" style="left:280px;top:517px;width:40px;height:5px;overflow:hidden"><div class="a t" style="left:8px;top:-4px;font-size:8.5px;color:#6e7079">万元</div></div>
<div class="a t" style="left:365.8px;width:80px;text-align:center;top:672px;font-size:8.5px;color:#6e7079">总行</div>
<div class="a t" style="left:585.4px;width:80px;text-align:center;top:672px;font-size:8.5px;color:#6e7079">一级分行</div>
<div class="a t" style="left:802.5px;width:80px;text-align:center;top:672px;font-size:8.5px;color:#6e7079">二级分行</div>
<div class="a t" style="left:1020.4px;width:80px;text-align:center;top:672px;font-size:8.5px;color:#6e7079">支行</div>
<div class="a t" style="left:653px;top:696.5px;font-size:8px;color:#6e7079">基本薪酬</div>
<div class="a t" style="left:715px;top:696.5px;font-size:8px;color:#6e7079">绩效薪酬</div>
<div class="a t" style="left:777px;top:696.5px;font-size:8px;color:#6e7079">福利津贴</div>
<div class="a card" style="left:1233.5px;top:179px;width:220px;height:258.5px;"><div class="a ph" style="height:43px"></div></div>
<div class="a bar" style="left:1247px;top:194.5px;height:11.5px"></div><div class="a t ptitle" style="left:1256px;top:195.5px">预警信息</div>
<div class="a t" style="left:1390.5px;top:195.5px;font-size:8.5px;color:#3b8cf0">查看全部</div>
<div class="a" style="left:1420.8px;top:182.8px;width:12.5px;height:12.5px;border-radius:50%;background:#e5534b"></div>
<div class="a t" style="left:1424.5px;top:185px;font-size:8.5px;font-weight:bold;color:#fff">4</div>
<div class="a" style="left:1233.5px;top:223px;width:210px;height:202.5px;overflow:hidden">
<div class="a" style="left:11.700000000000045px;top:11.099999999999994px;width:178px;height:79.5px;border-radius:5px;background:#fef1f1;overflow:hidden"><div class="a" style="left:0;top:0;width:2px;height:79.5px;background:#dc4a4a"></div></div>
<svg class="a" style="left:22.5px;top:22.599999999999994px" width="10" height="10" viewBox="0 0 10 10"><circle cx="5" cy="5" r="4.8" fill="#23262b"/><rect x="4.25" y="2.2" width="1.5" height="3.6" rx=".7" fill="#fff"/><circle cx="5" cy="7.4" r=".85" fill="#fff"/></svg>
<div class="a t" style="left:37.0px;top:23.499999999999993px;font-size:9.3px;color:#26292e;-webkit-text-stroke:0.25px #26292e">薪酬总额超限预警</div>
<div class="a t" style="left:22.700000000000045px;top:42.7px;font-size:9px;color:#73777e">华东分行薪酬总额超出预算5.2%，需关</div>
<div class="a t" style="left:22.700000000000045px;top:55.5px;font-size:9px;color:#73777e">注</div>
<div class="a t" style="left:22.700000000000045px;top:71.9px;font-size:8.5px;color:#a3a7ae">10分钟前</div>
<div class="a" style="left:11.700000000000045px;top:98.19999999999999px;width:178px;height:66.5px;border-radius:5px;background:#fefae9;overflow:hidden"><div class="a" style="left:0;top:0;width:2px;height:66.5px;background:#e8b030"></div></div>
<svg class="a" style="left:22.5px;top:109.69999999999999px" width="13" height="10" viewBox="0 0 13 10"><circle cx="4.3" cy="2.5" r="2.5" fill="#23262b"/><path d="M0 10c0-3 1.8-4.6 4.3-4.6 1.3 0 2.2.3 3 .9-.5.7-.8 1.6-.8 2.6 0 .4 0 .8.2 1.1z" fill="#23262b"/><circle cx="10" cy="7.6" r="2.9" fill="#23262b"/><path d="M10 6.2v1.5l.9.6" stroke="#fefae9" stroke-width=".8" fill="none"/></svg>
<div class="a t" style="left:37.0px;top:110.6px;font-size:9.3px;color:#26292e;-webkit-text-stroke:0.25px #26292e">延期支付到期提醒</div>
<div class="a t" style="left:22.700000000000045px;top:129.8px;font-size:9px;color:#73777e">3名高管延期薪酬将于本月到期支付</div>
<div class="a t" style="left:22.700000000000045px;top:146.2px;font-size:8.5px;color:#a3a7ae">30分钟前</div>
<div class="a" style="left:11.700000000000045px;top:172.39999999999998px;width:178px;height:70px;border-radius:5px;background:#fef1f1;overflow:hidden"><div class="a" style="left:0;top:0;width:2px;height:70px;background:#dc4a4a"></div></div>
<svg class="a" style="left:22.5px;top:183.89999999999998px" width="10" height="10" viewBox="0 0 10 10"><path d="M1 0.5V9.2H9.8" fill="none" stroke="#23262b" stroke-width="1.3"/><rect x="3" y="1.6" width="5.5" height="1.2" fill="#23262b"/><rect x="3" y="4.3" width="4" height="1.2" fill="#23262b"/><rect x="3" y="7" width="6" height="1.2" fill="#23262b"/></svg>
<div class="a t" style="left:37.0px;top:184.79999999999998px;font-size:9.3px;color:#26292e;-webkit-text-stroke:0.25px #26292e">薪酬倍数异常</div>
<div class="a t" style="left:22.700000000000045px;top:204.0px;font-size:9px;color:#73777e">XX分行高管薪酬倍数超过上限</div>
<div class="a t" style="left:22.700000000000045px;top:220.4px;font-size:8.5px;color:#a3a7ae">1小时前</div>
</div>
<div class="a" style="left:1424.3px;top:234px;width:3.6px;height:119px;border-radius:2px;background:#c9d0da"></div>
<div class="a card" style="left:1233.5px;top:450px;width:220px;height:257px;"><div class="a ph" style="height:41px"></div></div>
<div class="a bar" style="left:1247px;top:464.5px;height:11.5px"></div><div class="a t ptitle" style="left:1256px;top:465.5px">高管薪酬排行</div>
<div class="a" style="left:1360.3px;top:460.3px;width:66.3px;height:20px;border:1px solid #dcdfe6;border-radius:3px;background:#fff"></div>
<div class="a t" style="left:1372px;top:466.5px;font-size:9px;color:#555a62">2024年</div>
<svg class="a" style="left:1410.5px;top:468px" width="9" height="6" viewBox="0 0 9 6"><path d="M1 1 L4.5 4.5 L8 1" fill="none" stroke="#a8abb2" stroke-width="1"/></svg>
<div class="a" style="left:1233.5px;top:492px;width:210px;height:204.5px;overflow:hidden">
<div class="a" style="left:11.5px;top:23.9px;width:18px;height:18px;border-radius:4px;background:#fdf0c2"></div>
<div class="a t" style="left:11.5px;width:18px;text-align:center;top:28.4px;font-size:9px;color:#d4880c">1</div>
<div class="a t" style="left:38.5px;top:21.4px;font-size:9.5px;color:#2a2d33">张**</div>
<div class="a t" style="left:38.5px;top:36.7px;font-size:8px;color:#a3a7ae">总行-行长</div>
<div class="a t" style="left:180.5px;top:28.4px;font-size:9.5px;font-weight:bold;color:#4a7ff0">万</div>
<div class="a" style="left:11.5px;top:54.4px;width:180px;height:0;border-top:1px dashed #e6e8ec"></div>
<div class="a" style="left:11.5px;top:68.0px;width:18px;height:18px;border-radius:4px;background:#ececee"></div>
<div class="a t" style="left:11.5px;width:18px;text-align:center;top:72.5px;font-size:9px;color:#666">2</div>
<div class="a t" style="left:38.5px;top:65.5px;font-size:9.5px;color:#2a2d33">李**</div>
<div class="a t" style="left:38.5px;top:80.8px;font-size:8px;color:#a3a7ae">总行-副行长</div>
<div class="a t" style="left:180.5px;top:72.5px;font-size:9.5px;font-weight:bold;color:#4a7ff0">万</div>
<div class="a" style="left:11.5px;top:98.5px;width:180px;height:0;border-top:1px dashed #e6e8ec"></div>
<div class="a" style="left:11.5px;top:112.2px;width:18px;height:18px;border-radius:4px;background:#fcd6ab"></div>
<div class="a t" style="left:11.5px;width:18px;text-align:center;top:116.7px;font-size:9px;color:#d9541e">3</div>
<div class="a t" style="left:38.5px;top:109.7px;font-size:9.5px;color:#2a2d33">王**</div>
<div class="a t" style="left:38.5px;top:125.0px;font-size:8px;color:#a3a7ae">总行-副行长</div>
<div class="a t" style="left:180.5px;top:116.7px;font-size:9.5px;font-weight:bold;color:#4a7ff0">万</div>
<div class="a" style="left:11.5px;top:142.7px;width:180px;height:0;border-top:1px dashed #e6e8ec"></div>
<div class="a" style="left:11.5px;top:155.4px;width:18px;height:18px;border-radius:4px;background:#f2f3f5"></div>
<div class="a t" style="left:11.5px;width:18px;text-align:center;top:159.9px;font-size:9px;color:#777">4</div>
<div class="a t" style="left:38.5px;top:152.9px;font-size:9.5px;color:#2a2d33">陈**</div>
<div class="a t" style="left:38.5px;top:168.2px;font-size:8px;color:#a3a7ae">华东分行-行长</div>
<div class="a t" style="left:180.5px;top:159.9px;font-size:9.5px;font-weight:bold;color:#4a7ff0">万</div>
<div class="a" style="left:11.5px;top:185.9px;width:180px;height:0;border-top:1px dashed #e6e8ec"></div>
<div class="a" style="left:11.5px;top:199.5px;width:18px;height:18px;border-radius:4px;background:#f2f3f5"></div>
<div class="a t" style="left:11.5px;width:18px;text-align:center;top:204.0px;font-size:9px;color:#777">5</div>
<div class="a t" style="left:38.5px;top:197.0px;font-size:9.5px;color:#2a2d33">刘**</div>
<div class="a t" style="left:38.5px;top:212.3px;font-size:8px;color:#a3a7ae">华东分行-副行长</div>
</div>
<div class="a" style="left:1388px;top:512.6px;width:28.5px;height:27px;border-radius:10px;background:#e2e7f8"></div>
<div class="a" style="left:1388px;top:554px;width:28.5px;height:26px;border-radius:10px;background:#e5eaf8"></div>
<div class="a" style="left:1388px;top:607.9px;width:31px;height:12.7px;border-radius:4px;background:#d8e0f8"></div>
<div class="a" style="left:1388px;top:647.9px;width:28px;height:13.6px;background:#cfdaf8"></div>
<div class="a" style="left:1424px;top:504px;width:3.4px;height:140.5px;border-radius:2px;background:#c9d0da"></div>
<div class="a t" style="left:1010px;top:664.5px;font-size:25px;color:#f0f0f0;text-shadow:1px 1px 0 #3a3a3a,1.5px 1.5px 1px rgba(0,0,0,.35)">掘金技术社区</div>
<div class="a t" style="left:1165px;top:664.5px;font-size:25px;color:#f0f0f0;text-shadow:1px 1px 0 #3a3a3a,1.5px 1.5px 1px rgba(0,0,0,.35)">@</div>
<div class="a t" style="left:1196px;top:664.5px;font-size:25px;color:#f0f0f0;text-shadow:1px 1px 0 #3a3a3a,1.5px 1.5px 1px rgba(0,0,0,.35)">用户</div>
<div class="a t" style="left:1244px;top:664.5px;font-size:25px;color:#f0f0f0;text-shadow:1px 1px 0 #3a3a3a,1.5px 1.5px 1px rgba(0,0,0,.35);font-size:25.3px">119116922394</div>
</body></html>
